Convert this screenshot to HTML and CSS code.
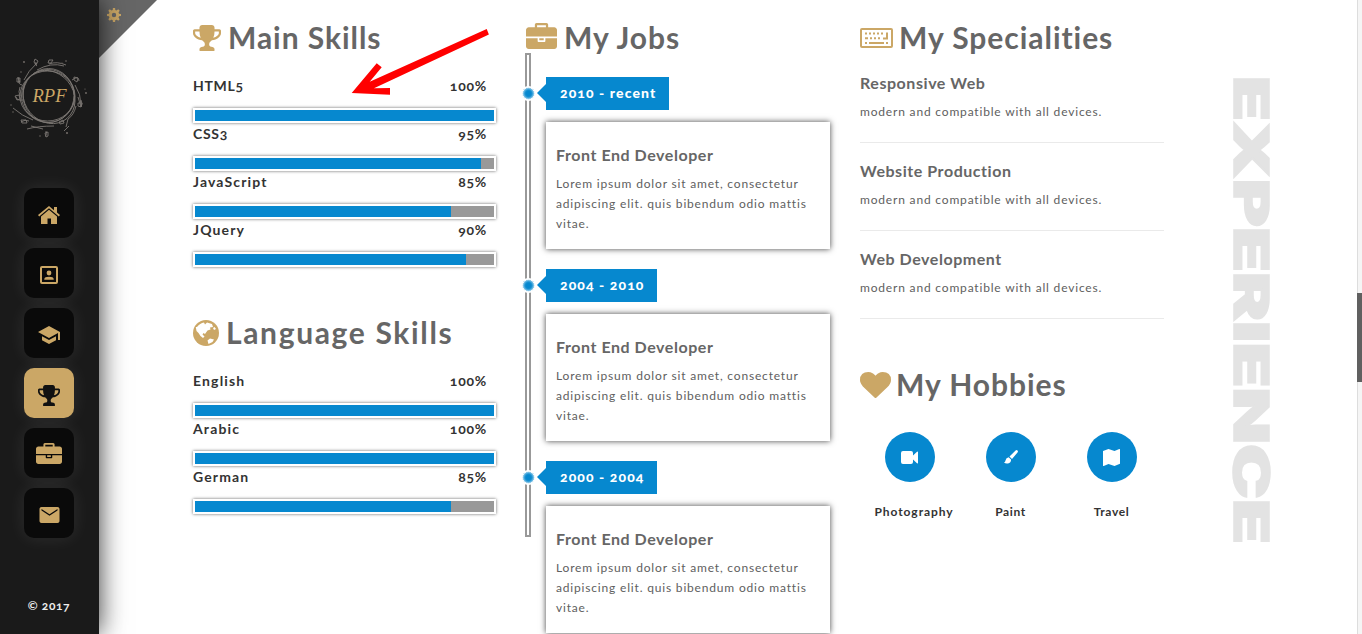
FILE: index.html
```html
<!DOCTYPE html>
<html lang="en">
<head>
<meta charset="utf-8">
<title>Experience</title>
<link rel="stylesheet" href="styles.css">
</head>
<body>
<svg class="defs" width="0" height="0">
  <symbol id="trophy" viewBox="64 128 1664 1536" preserveAspectRatio="none"><path d="M522 883q-74-162-74-371h-256v96q0 78 94.500 162t235.500 113zm1078-275v-96h-256q0 209-74 371 141-29 235.500-113t94.500-162zm128-128v128q0 71-41.500 143t-112 130-173 97.500-215.500 44.500q-42 54-95 95-38 34-52.500 72.500t-14.500 89.500q0 54 30.500 91t97.500 37q75 0 133.500 45.500t58.500 114.500v64q0 14-9 23t-23 9h-832q-14 0-23-9t-9-23v-64q0-69 58.500-114.500t133.500-45.500q67 0 97.500-37t30.500-91q0-51-14.500-89.500t-52.500-72.500q-53-41-95-95-113-5-215.500-44.500t-173-97.500-112-130-41.500-143v-128q0-40 28-68t68-28h288v-96q0-66 47-113t113-47h576q66 0 113 47t47 113v96h288q40 0 68 28t28 68z"/></symbol>
  <symbol id="briefcase" viewBox="0 0 1792 1536" preserveAspectRatio="none"><path d="M640 256h512v-128h-512v128zm1152 640v480q0 66-47 113t-113 47h-1472q-66 0-113-47t-47-113v-480h672v160q0 26 19 45t45 19h320q26 0 45-19t19-45v-160h672zm-768 0v128h-256v-128h256zm768-480v384h-1792v-384q0-66 47-113t113-47h352v-160q0-40 28-68t68-28h576q40 0 68 28t28 68v160h352q66 0 113 47t47 113z"/></symbol>
</svg>
<div class="page">
  <aside class="sidebar">
    <svg class="logo" width="80" height="84" viewBox="10 56 80 84">
      <g fill="none" stroke="#8d8883" stroke-width=".9" opacity=".85">
        <circle cx="49" cy="96" r="26.500"/><ellipse cx="48.500" cy="96" rx="27.500" ry="25"/><ellipse cx="49.500" cy="95.500" rx="25.500" ry="27"/><ellipse cx="50" cy="97" rx="28" ry="24.500" transform="rotate(50 50 97)"/>
        <path d="M25 80q4-9 13-17M37 62q-2 3 1 4M38 70q14-8 27-4M50 64q8-3 17 1M23 85q-5-1-3-7M19 77l2 6M24 100q-6 1-7-3M14 108q9 8 20 12M22 122q4-3 8-1M28 129q11-3 27-3M47 131q1 5-1 5M67 127l2-8q6-4 8-13M65 131l5-5M76 85q6 9 6 20M73 80q7-5 7 1M79 97l3 10q2-3 0-7M21 96q-2-4 0-9M32 126l12 3"/>
        <path d="M36 59l3 2-2 4-2-3zM50 60l4 0-2 3-3 0zM18 78l3 0 0 4-3 0zM16 96l4-1 1 4-3 1zM22 120l5 0 1 3-5 0zM46 133l3-1 0 4-2 1zM75 77l4 1-1 4-3-2zM79 103l4 0-1 4-3-1zM60 122l4-2 1 3-4 1z"/>
      </g>
      <g fill="#77716c"><circle cx="25" cy="62" r=".9"/><circle cx="22" cy="72" r=".7"/><circle cx="67" cy="61" r=".8"/><circle cx="63" cy="63" r=".6"/><circle cx="87" cy="93" r=".9"/><circle cx="86" cy="89" r=".6"/><circle cx="12" cy="105" r=".7"/><circle cx="14" cy="112" r=".7"/><circle cx="68" cy="133" r="1"/><circle cx="41" cy="136" r=".7"/></g>
      <text class="monogram" x="33.500" y="102" textLength="34" lengthAdjust="spacingAndGlyphs">RPF</text>
    </svg>
    <nav class="nav">
      <a class="nav-item"><svg width="22" height="18" viewBox="0 0 22 18"><path d="M11 0 16 4.200V1h3v5.500l3 2.600-1.200 1.400L11 2.200 1.200 10.500 0 9.100zM11 3.800 19 10.600V18h-6v-5.500H9.500V18H3V10.600z"/></svg></a>
      <a class="nav-item"><svg width="18" height="18" viewBox="0 0 18 18"><path fill-rule="evenodd" d="M2 0h14q2 0 2 2v14q0 2-2 2H2q-2 0-2-2V2Q0 0 2 0zm0 2v14h14V2z"/><circle cx="9" cy="7" r="2.400"/><path d="M4.300 13.700V13Q4.500 10.700 9 10.700T13.700 13v.7z"/></svg></a>
      <a class="nav-item"><svg width="22" height="18" viewBox="1 3 22 18"><path d="M5 13.180v4L12 21l7-3.820v-4L12 17zM12 3 1 9l11 6 9-4.910V17h2V9z"/></svg></a>
      <a class="nav-item active"><svg width="22" height="21"><use href="#trophy"/></svg></a>
      <a class="nav-item work"><svg width="26" height="21"><use href="#briefcase"/></svg></a>
      <a class="nav-item"><svg width="21" height="16" viewBox="2 4 20 16"><path d="M20 4H4c-1.100 0-2 .9-2 2v12c0 1.100.9 2 2 2h16c1.100 0 2-.9 2-2V6c0-1.100-.9-2-2-2zm0 3.500-8 5.200-8-5.200V6l8 5.200L20 6z"/></svg></a>
    </nav>
    <div class="copyright">© 2017</div>
  </aside>
  <div class="corner"><svg width="14" height="14" viewBox="-7 -7 14 14"><g fill="#cba766"><path fill-rule="evenodd" d="M-5.200 0a5.200 5.200 0 1 0 10.400 0a5.200 5.200 0 1 0-10.400 0zM-2.200 0a2.200 2.200 0 1 1 4.400 0a2.200 2.200 0 1 1-4.400 0z"/><g id="teeth"><path d="M-1.300-4.600-1.100-7h2.200l.2 2.400zM-1.300 4.600-1.100 7h2.200l.2-2.400zM-4.600-1.300-7-1.100v2.200l2.400.2zM4.600-1.300 7-1.100v2.200l-2.400.2z"/></g><use href="#teeth" transform="rotate(45)"/></g></svg></div>

  <main class="content">
    <section class="col">
      <h2><svg width="28" height="26"><use href="#trophy"/></svg><span>Main Skills</span></h2>
      <div class="skills">
        <div class="skill"><p><span class="caps">HTML5</span><span>100%</span></p><div class="bar"><i style="width:100%"></i></div></div>
        <div class="skill"><p><span class="caps">CSS3</span><span>95%</span></p><div class="bar"><i style="width:95.600%"></i></div></div>
        <div class="skill"><p><span class="name">JavaScript</span><span>85%</span></p><div class="bar"><i style="width:85.600%"></i></div></div>
        <div class="skill"><p><span class="name">JQuery</span><span>90%</span></p><div class="bar"><i style="width:90.600%"></i></div></div>
      </div>
      <h2 class="second"><svg width="26" height="26" viewBox="0 0 26 26"><circle cx="13" cy="13" r="13"/><path class="land" d="M4 7Q7 3 11 2.500l1 2 2-2 5 1.500 1 3-3 .5.500 2-3 1-2.500 3.500-1.500-1-1 1.500 2 2-1.500 1.500-2.500-2-2-3-2-2-.7-4zM14.500 20.500l2.500-2 4 1-1.500 2.500-4 2zM20 8l1.500-1 1.500 2-2 1z"/></svg><span class="h-lang">Language Skills</span></h2>
      <div class="skills">
        <div class="skill"><p><span class="name">English</span><span>100%</span></p><div class="bar"><i style="width:100%"></i></div></div>
        <div class="skill"><p><span class="name">Arabic</span><span>100%</span></p><div class="bar"><i style="width:100%"></i></div></div>
        <div class="skill"><p><span class="name">German</span><span>85%</span></p><div class="bar"><i style="width:85.600%"></i></div></div>
      </div>
    </section>

    <section class="col jobs">
      <h2><svg width="31" height="26"><use href="#briefcase"/></svg><span>My Jobs</span></h2>
      <div class="rail"></div>
      <div class="timeline">
        <article class="job"><b class="dot"></b><div class="tag">2010 - recent</div><div class="card"><h3>Front End Developer</h3><p>Lorem ipsum dolor sit amet, consectetur<br>adipiscing elit. quis bibendum odio mattis<br>vitae.</p></div></article>
        <article class="job"><b class="dot"></b><div class="tag">2004 - 2010</div><div class="card"><h3>Front End Developer</h3><p>Lorem ipsum dolor sit amet, consectetur<br>adipiscing elit. quis bibendum odio mattis<br>vitae.</p></div></article>
        <article class="job"><b class="dot"></b><div class="tag">2000 - 2004</div><div class="card"><h3>Front End Developer</h3><p>Lorem ipsum dolor sit amet, consectetur<br>adipiscing elit. quis bibendum odio mattis<br>vitae.</p></div></article>
      </div>
    </section>

    <section class="col specialities">
      <h2><svg class="kb" width="33" height="20" viewBox="0 0 33 20"><path fill-rule="evenodd" d="M2 0h29q2 0 2 2v16q0 2-2 2H2q-2 0-2-2V2Q0 0 2 0zm0 2v16h29V2z"/><path d="M5 4.500h2v2H5zm4 0h2v2H9zm4 0h2v2h-2zm4 0h2v2h-2zm4 0h2v2h-2zm5 0h2v7h-5v-2h3zM5 9.300h3v2H5zm5 0h2v2h-2zm4 0h2v2h-2zm4 0h2v2h-2zM5 14h2v2H5zm4 0h15v2H9zm17 0h2v2h-2z"/></svg><span>My Specialities</span></h2>
      <div class="specs">
        <div class="spec"><h3>Responsive Web</h3><p>modern and compatible with all devices.</p></div>
        <div class="spec"><h3>Website Production</h3><p>modern and compatible with all devices.</p></div>
        <div class="spec"><h3>Web Development</h3><p>modern and compatible with all devices.</p></div>
      </div>
      <h2 class="hob"><svg width="31" height="26" viewBox="0 128 1792 1536" preserveAspectRatio="none"><path d="M896 1664q-26 0-44-18l-624-602q-10-8-27.500-26t-55.500-65.500-68-97.500-53.500-121-23.500-138q0-220 127-344t351-124q62 0 126.500 21.500t120 58 95.500 68.500 76 68q36-36 76-68t95.500-68.500 120-58 126.500-21.500q224 0 351 124t127 344q0 221-229 450l-623 600q-18 18-44 18z"/></svg><span>My Hobbies</span></h2>
      <div class="hobbies">
        <div class="hobby"><div class="disc"><svg width="17" height="13" viewBox="0 0 17 13"><path d="M2 0h8q2 0 2 2v2.500L16 .8q1-.6 1 .5v10.400q0 1.100-1 .5L12 8.500V11q0 2-2 2H2q-2 0-2-2V2Q0 0 2 0z"/></svg></div><span class="photo">Photography</span></div>
        <div class="hobby"><div class="disc"><svg width="14" height="14" viewBox="0 0 14 14"><path d="M13.500.5q.9.900 0 2L8 9 5.500 6.500 11.600.4q1-.8 1.900.1zM4.700 7.300 7 9.500q.3 3.300-3 4-2.500.4-4-1 1.400-.3 1.500-1.900Q2 7.700 4.700 7.300z"/></svg></div><span>Paint</span></div>
        <div class="hobby"><div class="disc"><svg width="17" height="17" viewBox="0 0 17 17"><path d="M0 2 5.500.1 11.500 2 16.300.1q.7-.1.700.5V14.700L11.500 16.900 5.500 15 .7 16.900Q0 17 0 16.400z"/></svg></div><span>Travel</span></div>
      </div>
    </section>
  </main>

  <svg class="side-title" width="70" height="490" viewBox="0 0 70 490"><text transform="translate(20 6) rotate(90)" textLength="468" lengthAdjust="spacingAndGlyphs">EXPERIENCE</text></svg>
  <div class="scroll"><div class="thumb"></div></div>
  <svg class="arrow" width="140" height="70" viewBox="350 27 140 70"><path fill="#f00" d="M351.700 93 376.700 63.300l5 4-12 14.500L486.700 29l2.200 5.500L374 88.300l16-.4v6.900z"/></svg>
</div>
</body>
</html>
```
FILE: styles.css
```css
* { box-sizing: border-box; }
body { margin: 0; background: #fff; font-family: Lato, "Open Sans", sans-serif; font-variant-numeric: oldstyle-nums; color: #333; overflow: hidden; }
h2, h3, p { margin: 0; }
svg { display: block; flex: none; }
.defs { position: absolute; }
.page { position: relative; display: flex; height: 634px; overflow: hidden; }

.sidebar { position: relative; z-index: 2; flex: none; width: 99px; height: 634px; background: #1a1a1a; box-shadow: 0 0 25px rgba(0,0,0,.8); display: flex; flex-direction: column; align-items: center; padding: 56px 1px 0 0; }
.monogram { font: italic 18px "Liberation Serif", serif; fill: #cba766; }
.nav { display: flex; flex-direction: column; gap: 10px; margin-top: 48px; }
.nav-item { width: 50px; height: 50px; border-radius: 10px; background: #0a0a0a; box-shadow: 0 0 18px rgba(255,255,255,.09); display: flex; align-items: center; justify-content: center; padding-top: 4px; fill: #cba766; }
.nav-item.active { background: #cba766; fill: #111; }
.nav-item.work { padding-top: 1px; }
.copyright { margin-top: 59px; font-size: 12px; line-height: 18px; font-weight: 700; color: #eee; letter-spacing: .6px; }

.corner { position: absolute; z-index: 1; left: 99px; top: 0; width: 58px; height: 58px; background: #666; clip-path: polygon(0 0, 100% 0, 0 100%); padding: 8px; }

.content { display: grid; grid-template-columns: 303px 305px 303px; column-gap: 30px; margin-left: 94px; padding-top: 18px; height: 634px; }
.col { display: flex; flex-direction: column; min-width: 0; }
h2 { display: flex; align-items: center; gap: 7px; height: 40px; font-size: 30px; line-height: 40px; font-weight: 700; color: #666; fill: #cba766; white-space: nowrap; letter-spacing: .95px; }
h2 span { margin-top: -2px; }
h2 .land { fill: #fff; }
h2.second { margin-top: 45px; }
.h-lang { letter-spacing: 1.65px; }
.skills { margin-top: 18px; }
.skill { height: 48px; }
.skill p { display: flex; justify-content: space-between; padding-right: 9px; height: 20px; line-height: 20px; font-size: 14px; font-weight: 700; letter-spacing: .75px; }
.skill .name { letter-spacing: 1.150px; }
.skill .caps { letter-spacing: .7px; }
.bar { display: flex; margin-top: 12px; height: 15px; padding: 2px; background: linear-gradient(#999, #999) content-box, #fff; box-shadow: 0 0 3px rgba(0,0,0,.6); }
.bar i { background: #0688cf; }

.jobs { position: relative; }
.jobs h2 svg { margin-top: -5px; }
.rail { position: absolute; left: -1px; top: 35px; width: 6px; height: 484px; border: 2px solid #999; }
.timeline { display: flex; flex-direction: column; gap: 20px; margin: 19px 0 0 20px; }
.job { position: relative; width: 284px; }
.dot { position: absolute; left: -24px; top: 10px; width: 13px; height: 13px; border: 1px solid #fff; border-radius: 50%; background: #0688cf; box-shadow: 0 0 0 1px #fff, inset 0 0 2px 1px #9bd0ec; }
.tag { position: relative; width: max-content; height: 33px; padding: 0 13px 0 14px; background: #0688cf; color: #fff; font-size: 14px; line-height: 31px; font-weight: 900; letter-spacing: 1.100px; }
.tag::before { content: ""; position: absolute; left: -9px; top: 7px; border: 9px solid transparent; border-right-color: #0688cf; border-left: 0; }
.card { margin-top: 12px; height: 127px; padding: 23px 10px 15px; background: #fff; box-shadow: 0 0 6px #444; }
h3 { font-size: 16px; line-height: 20px; font-weight: 700; color: #666; white-space: nowrap; letter-spacing: .55px; }
.card p, .spec p { font-size: 12px; line-height: 20px; color: #606060; letter-spacing: .82px; white-space: nowrap; }
.card p { margin-top: 9px; }

.specialities { margin-left: -1px; }
.specialities h2 { gap: 6px; }
.specs { margin-top: 15px; }
.spec { height: 88px; }
.spec p { margin-top: 9px; height: 20px; padding-bottom: 20px; box-sizing: content-box; border-bottom: 1px solid #eaeaea; }
.specialities h2.hob { margin-top: 28px; gap: 5px; }
.hobbies { display: grid; grid-template-columns: 101px 101px 101px; margin: 27px 0 0 -1px; }
.hobby { display: flex; flex-direction: column; align-items: center; font-size: 12px; line-height: 18px; font-weight: 700; letter-spacing: .6px; }
.photo { letter-spacing: .95px; padding-left: 9px; }
.disc { width: 50px; height: 50px; border-radius: 50%; background: #0688cf; fill: #fff; display: flex; align-items: center; justify-content: center; margin-bottom: 21px; }

.side-title { margin: 70px 0 0 50px; }
.side-title text { font: 900 48px Inter, sans-serif; fill: #e3e3e3; stroke: #e3e3e3; stroke-width: 1.500; }
.scroll { position: absolute; right: 0; top: 0; width: 5px; height: 634px; background: #f5f5f5; border-left: 1px solid #ddd; padding-top: 293px; }
.thumb { height: 89px; margin-left: -1px; background: #606060; }
.arrow { position: absolute; left: 350px; top: 27px; }
```
